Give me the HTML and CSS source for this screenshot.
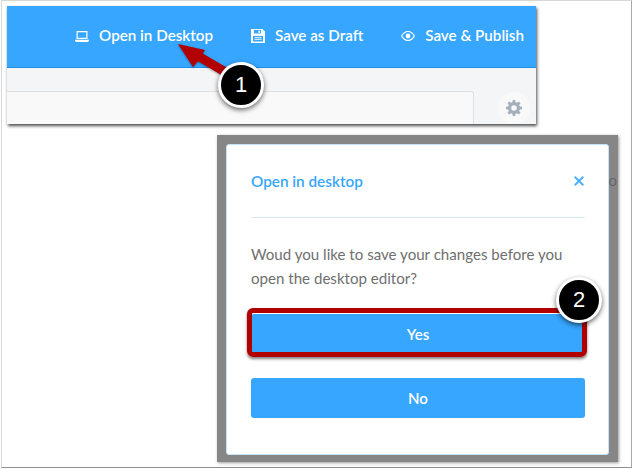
FILE: index.html
```html
<!DOCTYPE html>
<html lang="en">
<head>
  <meta charset="UTF-8">
  <title>Open in desktop</title>
  <link rel="stylesheet" href="styles.css">
</head>
<body>
  <div class="frame">
    <div class="editor">
      <div class="toolbar">
        <a class="tool">
          <svg class="tool-icon" viewBox="0 0 14 11"><path fill="#fff" fill-rule="evenodd" d="M1.500 0h11v8h-11zM2.700 1.200v5.600h8.600V1.200zM0 8.800h14v1l-1 1.200H1l-1-1.200z"/></svg>
          Open in Desktop
        </a>
        <a class="tool">
          <svg class="tool-icon" viewBox="0 0 14 14"><path fill="#fff" fill-rule="evenodd" d="M0 0h11.500L14 2.500V14H0zM3 1v3.500h7V1zM7.500 1.500H9V4H7.500zM2 7v5.500h10V7zM3.500 8.300h7v.9h-7zM3.500 10.200h7v.9h-7z"/></svg>
          Save as Draft
        </a>
        <a class="tool">
          <svg class="tool-icon" viewBox="0 0 14 10"><path fill="#fff" fill-rule="evenodd" d="M0 5c1.500-3 4-5 7-5s5.500 2 7 5c-1.500 3-4 5-7 5S1.500 8 0 5zM1.300 5c1.300 2.200 3.300 3.900 5.700 3.900s4.400-1.700 5.700-3.900C11.400 2.800 9.400 1.100 7 1.100S2.600 2.800 1.300 5zM7 2.600a2.400 2.400 0 1 1 0 4.800 2.400 2.400 0 0 1 0-4.800z"/></svg>
          Save &amp; Publish
        </a>
      </div>
      <div class="editor-body">
        <div class="field"></div>
        <div class="gear-wrap">
          <svg class="gear" viewBox="0 0 16 16"><path fill="#a3b0bc" fill-rule="evenodd" d="M6.800 0h2.400l.4 2.200 1.300.6L12.800 1.500l1.700 1.700-1.300 1.900.6 1.300 2.200.4v2.400l-2.200.4-.6 1.300 1.300 1.900-1.700 1.700-1.900-1.300-1.300.6-.4 2.200H6.800l-.4-2.200-1.300-.6-1.900 1.300-1.700-1.700 1.300-1.900-.6-1.300L0 9.200V6.800l2.200-.4.6-1.300-1.300-1.900 1.700-1.700 1.900 1.300 1.300-.6zM8 5.200a2.800 2.800 0 1 0 0 5.600 2.800 2.800 0 0 0 0-5.600z"/></svg>
        </div>
      </div>
    </div>

    <div class="overlay">
      <span class="behind">o</span>
      <div class="dialog">
        <div class="dialog-head">
          <span class="dialog-title">Open in desktop</span>
          <svg class="close" viewBox="0 0 10 10"><path stroke="#4db0fb" stroke-width="2" d="M.7.700l8.600 8.600M9.300.700L.7 9.300"/></svg>
        </div>
        <p class="dialog-text">Woud you like to save your changes before you open the desktop editor?</p>
        <button class="btn">Yes</button>
        <button class="btn">No</button>
      </div>
    </div>

    <!-- callouts -->
    <svg class="arrow" viewBox="0 0 50 32"><path fill="#b20000" d="M0 0L27 6 24.700 9.400 49.600 24 45 32 20 17.200 15 23z"/></svg>
    <div class="highlight"></div>
    <div class="step step-one">1</div>
    <div class="step step-two">2</div>
  </div>
</body>
</html>
```

FILE: styles.css
```css
html, body {
  margin: 0;
  height: 100%;
  background-color: white;
}

body {
  font-family: 'Lato', 'Open Sans', sans-serif;
  overflow: hidden;
}

.frame {
  position: relative;
  box-sizing: border-box;
  width: 631px;
  height: 468px;
  margin-left: 1px;
  background-color: white;
  border: 1px solid #d8d8d8;
  border-bottom: 1px solid #909090;
  border-right: 1px solid #a8a8a8;
  overflow: hidden;
}

.editor {
  position: absolute;
  left: 5px;
  top: 5px;
  width: 529px;
  height: 118px;
  box-shadow: 1px 2px 3px rgba(0, 0, 0, 0.7);
}

.toolbar {
  display: flex;
  justify-content: flex-end;
  align-items: center;
  box-sizing: border-box;
  height: 62px;
  padding: 0 12px 4px 0;
  gap: 38px;
  background-color: #36a6ff;
  border-bottom: 1px solid #1e8fe8;
}

.tool {
  display: flex;
  align-items: center;
  gap: 10px;
  color: white;
  font-size: 15.200px;
  font-weight: 600;
}

.tool-icon {
  flex: none;
  width: 14px;
  margin-top: 3px;
}

.editor-body {
  position: relative;
  box-sizing: border-box;
  height: 56px;
  padding-top: 23px;
  background-color: #f4f5f7;
}

.field {
  box-sizing: border-box;
  width: 467px;
  height: 33px;
  background-color: #f9f9f9;
  border: 1px solid #e0e0e0;
  border-left: none;
  border-bottom: none;
  border-radius: 0 3px 0 0;
}

.gear-wrap {
  position: absolute;
  right: 6px;
  top: 24px;
  width: 32px;
  height: 32px;
  display: flex;
  align-items: center;
  justify-content: center;
  background-color: #f9f9f9;
  border-radius: 50%;
}

.gear {
  width: 16px;
  height: 16px;
}

.overlay {
  position: absolute;
  left: 215px;
  top: 134px;
  box-sizing: border-box;
  width: 401px;
  height: 327px;
  padding: 9px;
  background-color: #868686;
  box-shadow: 1px 1px 3px rgba(0, 0, 0, 0.4);
}

.behind {
  position: absolute;
  right: 1px;
  top: 36px;
  color: #666;
  font-size: 15px;
}

.dialog {
  box-sizing: border-box;
  height: 311px;
  padding: 0 23px 0 24px;
  background-color: white;
  border: 1px solid #c5e4fb;
  border-radius: 3px;
}

.dialog-head {
  display: flex;
  align-items: center;
  justify-content: space-between;
  height: 72px;
  border-bottom: 1px solid #d8e8f4;
}

.dialog-title {
  color: #36a6ff;
  font-size: 15.300px;
  font-weight: 600;
}

.close {
  width: 10px;
  height: 10px;
  margin-right: 1px;
}

.dialog-text {
  margin: 24px 0 0;
  color: #6f6f6f;
  font-size: 15.100px;
  line-height: 24px;
}

.btn {
  display: block;
  width: 100%;
  height: 40px;
  margin-top: 24px;
  color: white;
  background-color: #36a6ff;
  border: none;
  border-radius: 3px;
  font-family: inherit;
  font-size: 15px;
  font-weight: 600;
}

.arrow {
  position: absolute;
  left: 176px;
  top: 43px;
  width: 50px;
  height: 32px;
  filter: drop-shadow(0 1px 1px rgba(0, 0, 0, 0.35));
}

.highlight {
  position: absolute;
  left: 245px;
  top: 307px;
  box-sizing: border-box;
  width: 340px;
  height: 49px;
  border: 5px solid #b00000;
  border-radius: 6px;
  box-shadow: 0 2px 3px rgba(0, 0, 0, 0.5);
}

.step {
  position: absolute;
  box-sizing: border-box;
  width: 46px;
  height: 46px;
  display: flex;
  align-items: center;
  justify-content: center;
  color: white;
  background-color: black;
  border: 3px solid white;
  border-radius: 50%;
  box-shadow: 0 2px 5px rgba(0, 0, 0, 0.6);
  font-family: 'Liberation Sans', sans-serif;
  font-size: 22px;
}

.step-one {
  left: 216px;
  top: 61px;
}

.step-two {
  left: 554px;
  top: 276px;
}
```
